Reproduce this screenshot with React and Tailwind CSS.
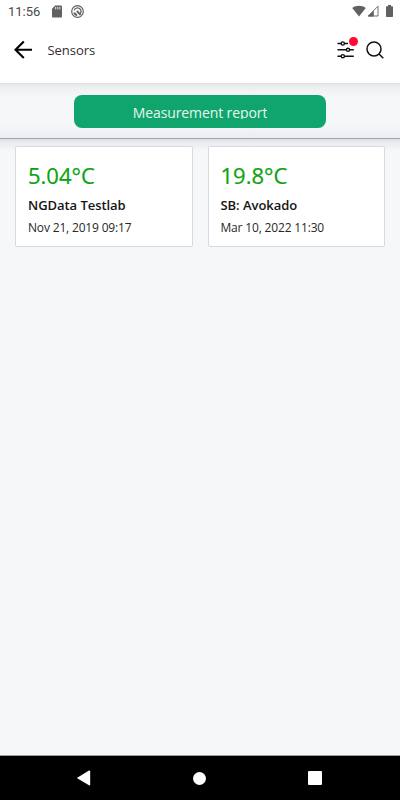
const sensors = [
  { id: 1, value: '5.04°C', name: 'NGData Testlab', time: 'Nov 21, 2019 09:17' },
  { id: 2, value: '19.8°C', name: 'SB: Avokado', time: 'Mar 10, 2022 11:30' },
];

function StatusBar() {
  return (
    <div className="flex h-6 shrink-0 items-start pl-2 pr-[7px] pt-[5px] text-[#616161]">
      <span className="w-[44px] whitespace-nowrap font-['Roboto',sans-serif] text-[13px] leading-[14px] text-[#4a4a4a]">
        11:56
      </span>
      <svg className="h-[13px] w-[10px]" viewBox="0 0 10 13" fill="currentColor">
        <path d="M3.2.5H9a1 1 0 0 1 1 1v10a1 1 0 0 1-1 1H1a1 1 0 0 1-1-1V3.8z" />
        <path d="M3.7 2v2.4M5.8 2v2.4M7.9 2v2.4" stroke="#fff" strokeWidth="0.9" />
      </svg>
      <svg className="ml-[9px] h-[13px] w-[13px]" viewBox="0 0 13 13" fill="none" stroke="currentColor">
        <circle cx="6.5" cy="6.5" r="5.8" strokeWidth="1.2" />
        <path d="M3.1 5.4C4 2.3 8.5 1.8 9.8 5c.6 1.6.1 2.9-.7 4" strokeWidth="1.3" />
        <path d="M3.2 7.4c.4 1.5 1.5 2.5 3 2.6M5.8 6l3.8 3.8" strokeWidth="1.9" />
      </svg>
      <svg className="ml-auto h-[12px] w-[14px]" viewBox="0 0 14 12" fill="currentColor">
        <path d="M7 11.5.2 3C4 .1 10 .1 13.8 3z" />
      </svg>
      <svg className="ml-[1px] h-[12px] w-[12px]" viewBox="0 0 12 12">
        <path d="M11 1.2V11H1.2z" fill="none" stroke="currentColor" strokeWidth="0.9" />
        <path d="M6.8 5.4V11.4H.6z" fill="currentColor" />
      </svg>
      <svg className="ml-[7px] h-[12px] w-[7px]" viewBox="0 0 7 12" fill="currentColor">
        <path d="M2 0h3v1.2h1.3a.7.7 0 0 1 .7.7v9.4a.7.7 0 0 1-.7.7H.7a.7.7 0 0 1-.7-.7V1.9a.7.7 0 0 1 .7-.7H2z" />
      </svg>
    </div>
  );
}

function Header() {
  return (
    <header className="flex h-[59px] shrink-0 items-start pl-[14px] pr-4 pt-4">
      <button type="button" aria-label="Back">
        <svg className="h-5 w-[19px]" viewBox="0 0 19 20" fill="none" stroke="#000" strokeWidth="2.1">
          <path d="M18 9.7H2M9.8 1.4 1.5 9.7l8.3 8.4" />
        </svg>
      </button>
      <h1 className="ml-[14.5px] text-[13px] leading-5 tracking-[-0.05px] text-[#303030]">Sensors</h1>
      <div className="relative ml-auto h-5 w-[22px]">
        <svg className="h-5 w-[22px]" viewBox="0 0 22 20" fill="none" stroke="#111" strokeWidth="1.4">
          <path d="M1.5 3.5h3.7M8.4 3.5H12M1.5 9.8h8.9M13.6 9.8h4.2M1.5 16.2h3.7M8.4 16.2h9.4" />
          <circle cx="6.8" cy="3.5" r="1.6" />
          <circle cx="12" cy="9.8" r="1.6" />
          <circle cx="6.8" cy="16.2" r="1.6" />
        </svg>
        <span className="absolute -top-[3px] left-[13px] h-[9px] w-[9px] rounded-full bg-[#ff0a32]" />
      </div>
      <button type="button" aria-label="Search" className="ml-[8px]">
        <svg className="h-5 w-[18px]" viewBox="0 0 18 20" fill="none" stroke="#111" strokeWidth="1.5">
          <circle cx="8" cy="9" r="7" />
          <path d="m13 14 4.3 4.2" />
        </svg>
      </button>
    </header>
  );
}

function SensorCard({ sensor }) {
  return (
    <div className="h-[101px] whitespace-nowrap rounded-xs border border-[#d6dae3] bg-white px-3">
      <p className="pt-3 text-[22px] font-medium leading-8 text-[#0aa30e] [-webkit-text-stroke:0.2px_#0aa30e]">
        {sensor.value}
      </p>
      <p className="mt-[3px] text-[13px] font-semibold leading-[22px] tracking-[-0.05px] text-[#151515]">
        {sensor.name}
      </p>
      <p className="text-[12px] leading-[23px] tracking-[-0.17px] text-[#282828]">{sensor.time}</p>
    </div>
  );
}

function NavigationBar() {
  return (
    <nav className="flex h-[45px] shrink-0 items-center justify-between border-t border-[#9a9fa0] bg-black pl-[77px] pr-[78px]">
      <svg className="h-4 w-[14px]" viewBox="0 0 14 16" fill="#fff">
        <path d="M12.4.5a.8.8 0 0 1 .8.8v13.4a.8.8 0 0 1-1.2.6L.6 8.6a.7.7 0 0 1 0-1.2L12 .6z" />
      </svg>
      <span className="h-[13px] w-[13px] rounded-full bg-white" />
      <span className="h-[14px] w-[14px] rounded-[1px] bg-white" />
    </nav>
  );
}

export default function App() {
  return (
    <div className="flex h-[800px] w-[400px] flex-col overflow-hidden bg-white font-['Open_Sans',sans-serif]">
      <StatusBar />
      <Header />
      <div className="h-14 shrink-0 border-b border-[#a3a5b6] bg-[linear-gradient(to_bottom,#dfe0e2_0px,#eceef0_3px,#f5f7f9_14px,#f5f7f9_42px,#eaecf0_55px)] px-[74px] pt-[11.5px]">
        <button type="button" className="flex h-[33px] w-full items-start justify-center rounded-lg bg-[#10a56c] pt-[8.5px]">
          {/* the label box is shorter than its line, so descenders are clipped */}
          <span className="block h-[16px] overflow-hidden text-[14px] leading-[20px] tracking-[-0.1px] text-[#e6f7ef]">
            Measurement report
          </span>
        </button>
      </div>
      <main className="grow bg-[#f5f7f9] bg-[linear-gradient(to_bottom,#dcdee1_0px,#eaecef_4px,#f5f7f9_12px)] px-[15px] pt-[7px]">
        <div className="grid grid-cols-2 gap-[15px]">
          {sensors.map((sensor) => (
            <SensorCard key={sensor.id} sensor={sensor} />
          ))}
        </div>
      </main>
      <NavigationBar />
    </div>
  );
}
